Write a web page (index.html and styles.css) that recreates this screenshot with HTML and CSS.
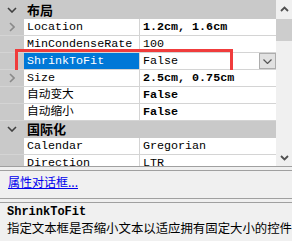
FILE: index.html
```html
<!DOCTYPE html>
<html lang="zh-CN">
  <head>
    <meta charset="UTF-8" />
    <title>属性</title>
    <link rel="stylesheet" href="styles.css">
  </head>
  <body>
    <div class="grid">
      <div class="rows">
        <div class="row category">
          <div class="gutter"><svg width="10" height="6" viewBox="0 0 10 6"><path d="M1 1 L5 5 L9 1" fill="none" stroke="#404040" stroke-width="1.6"/></svg></div>
          <div class="cat-name">布局</div>
        </div>
        <div class="row">
          <div class="gutter"><svg width="6" height="10" viewBox="0 0 6 10"><path d="M1 1 L5 5 L1 9" fill="none" stroke="#8a8a8a" stroke-width="1.6"/></svg></div>
          <div class="name">Location</div>
          <div class="value bold">1.2cm, 1.6cm</div>
        </div>
        <div class="row">
          <div class="gutter"></div>
          <div class="name">MinCondenseRate</div>
          <div class="value">100</div>
        </div>
        <div class="row selected">
          <div class="gutter"></div>
          <div class="name">ShrinkToFit</div>
          <div class="value">
            <span>False</span>
            <span class="drop"><svg width="9" height="5" viewBox="0 0 9 5"><path d="M0.5 0.5 L4.5 4.5 L8.5 0.5" fill="none" stroke="#555" stroke-width="1.2"/></svg></span>
          </div>
          <div class="highlight"></div>
        </div>
        <div class="row">
          <div class="gutter"><svg width="6" height="10" viewBox="0 0 6 10"><path d="M1 1 L5 5 L1 9" fill="none" stroke="#8a8a8a" stroke-width="1.6"/></svg></div>
          <div class="name">Size</div>
          <div class="value bold">2.5cm, 0.75cm</div>
        </div>
        <div class="row">
          <div class="gutter"></div>
          <div class="name">自动变大</div>
          <div class="value bold">False</div>
        </div>
        <div class="row">
          <div class="gutter"></div>
          <div class="name">自动缩小</div>
          <div class="value bold">False</div>
        </div>
        <div class="row category">
          <div class="gutter"><svg width="10" height="6" viewBox="0 0 10 6"><path d="M1 1 L5 5 L9 1" fill="none" stroke="#404040" stroke-width="1.6"/></svg></div>
          <div class="cat-name">国际化</div>
        </div>
        <div class="row">
          <div class="gutter"></div>
          <div class="name">Calendar</div>
          <div class="value">Gregorian</div>
        </div>
        <div class="row">
          <div class="gutter"></div>
          <div class="name">Direction</div>
          <div class="value">LTR</div>
        </div>
      </div>
      <div class="scrollbar">
        <div class="arrow"><svg width="9" height="6" viewBox="0 0 9 6"><path d="M1 5 L4.5 1.5 L8 5" fill="none" stroke="#505050" stroke-width="1.8"/></svg></div>
        <div class="thumb"></div>
        <div class="track"></div>
        <div class="arrow"><svg width="9" height="6" viewBox="0 0 9 6"><path d="M1 1 L4.5 4.5 L8 1" fill="none" stroke="#505050" stroke-width="1.8"/></svg></div>
      </div>
    </div>

    <div class="commands">
      <a href="#">属性对话框...</a>
    </div>

    <div class="desc">
      <div class="desc-title">ShrinkToFit</div>
      <div class="desc-text">指定文本框是否缩小文本以适应拥有固定大小的控件</div>
    </div>
  </body>
</html>
```
FILE: styles.css
```css
body {
  margin: 0;
  background-color: #f0f0f0;
  font-family: "Liberation Mono", "Noto Sans CJK SC", monospace;
  font-size: 11.7px;
  color: #000;
  width: 292px;
  height: 241px;
  overflow: hidden;
}

.grid {
  display: flex;
  height: 166px;
  border-bottom: 1px solid #a0a0a0;
  overflow: hidden;
}

.rows {
  flex: 1;
  padding-top: 2px;
  background-color: #c9c9c9;
  overflow: hidden;
}

.row {
  position: relative;
  display: grid;
  grid-template-columns: 24px 116px 1fr;
  height: 16px;
  border-bottom: 1px solid #d4d4d4;
  line-height: 16px;
}

.row.category {
  border-bottom-color: #c9c9c9;
}

.gutter {
  background-color: #c9c9c9;
  display: flex;
  align-items: center;
  justify-content: center;
}

.cat-name {
  grid-column: 2 / 4;
  padding-left: 3px;
  font-family: "Noto Sans CJK SC", sans-serif;
  font-weight: bold;
  font-size: 13px;
}

.name {
  background-color: #fff;
  padding-left: 3px;
  border-right: 1px solid #d4d4d4;
  white-space: nowrap;
  overflow: hidden;
}

.value {
  background-color: #fff;
  padding-left: 3px;
  display: flex;
  align-items: center;
  white-space: nowrap;
}

.bold {
  font-weight: bold;
}

.selected .name {
  background-color: #0078d7;
  color: #fff;
}

.drop {
  margin-left: auto;
  width: 15px;
  height: 14px;
  border: 1px solid #adadad;
  background-color: #e1e1e1;
  display: flex;
  align-items: center;
  justify-content: center;
}

.highlight {
  position: absolute;
  left: 15px;
  top: -4px;
  width: 212px;
  height: 18px;
  border: 3px solid #f03c3c;
  pointer-events: none;
}

.scrollbar {
  width: 16px;
  background-color: #f0f0f0;
  display: flex;
  flex-direction: column;
}

.arrow {
  height: 17px;
  display: flex;
  align-items: center;
  justify-content: center;
}

.thumb {
  margin-top: 2px;
  height: 22px;
  background-color: #cdcdcd;
}

.track {
  flex: 1;
}

.commands {
  margin-top: 3px;
  border-top: 1px solid #a0a0a0;
  border-bottom: 1px solid #a0a0a0;
  padding: 3px 0 0 8px;
  box-sizing: border-box;
  height: 29px;
  font-family: "Noto Sans CJK SC", sans-serif;
  font-size: 12px;
  line-height: 16px;
}

.commands a {
  color: #0000ee;
}

.desc {
  margin-top: 3px;
  border-top: 1px solid #a0a0a0;
  padding: 2px 7px;
}

.desc-title {
  font-weight: bold;
  font-size: 12px;
  line-height: 15px;
}

.desc-text {
  font-family: "Noto Sans CJK SC", sans-serif;
  font-size: 12.4px;
  line-height: 17px;
  white-space: nowrap;
}
```
